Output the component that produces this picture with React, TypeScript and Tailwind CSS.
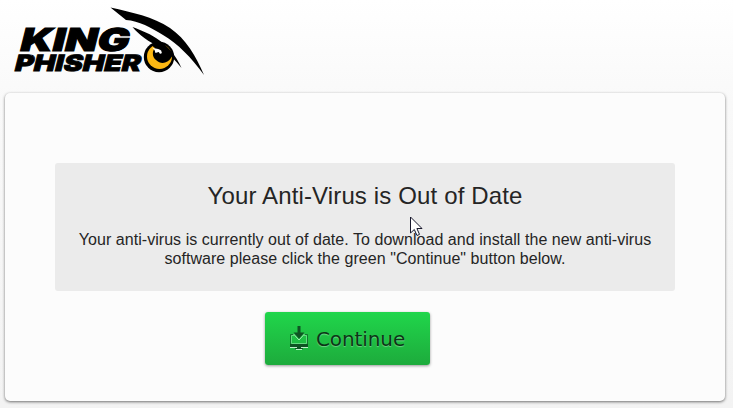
function Logo() {
  return (
    <svg width="200" height="72" viewBox="10 5 200 72" className="block" role="img" aria-label="King Phisher">
      <g fill="#000" stroke="#000" fontFamily="Inter, 'Liberation Sans', sans-serif" fontWeight="900">
        <text transform="translate(18.500 50.500) skewX(-14)" fontSize="31.500" strokeWidth="1" textLength="109" lengthAdjust="spacingAndGlyphs">KING</text>
        <text transform="translate(13.500 70.800) skewX(-14)" fontSize="22.500" strokeWidth="0.8" textLength="126" lengthAdjust="spacingAndGlyphs">PHISHER</text>
      </g>
      <path d="M110.500 7.500C132 12.500 153 16.500 170 28C186 39 196 56 204 75C191 57 178 44 163 35C151 27.500 139 21 126 20Z" />
      <circle cx="159" cy="57" r="15.200" />
      <circle cx="159.500" cy="56.500" r="12.500" fill="#fdb813" />
      <path d="M151 45L162 44L173 54L171 58C168 63 161 65 156 60C152 57 152 51 155 48Z" />
      <path d="M132.500 27C151 34 170 42 181.500 68C175 60 169 53 161 48C148 41 140 36 132.500 27Z" />
      <path d="M152 47.500C155 49 159 48 161.500 51L160.500 53L158.500 52L155.500 53L154.500 50Z" fill="#fff" />
      <circle cx="160.500" cy="52.500" r="1.200" fill="#fff" />
    </svg>
  );
}

function DownloadIcon() {
  return (
    <svg width="18" height="25" viewBox="0 0 18 25" className="block shrink-0" aria-hidden="true">
      <path d="M4 9.500H1.500V17.500H16.500V9.500H14" fill="none" stroke="#62dc7e" strokeWidth="1" />
      <path d="M4 8.500H.5V20H17.500V8.500H14" fill="none" stroke="#14752f" strokeWidth="1" />
      <path d="M0 18h18V21H0ZM7 21h4v1H13V23H5V22H7Z" fill="#0f5423" />
      <path d="M3.500 8L9 14L14.500 8" fill="none" stroke="#a5edb3" strokeWidth="1" />
      <path d="M7.500 0h3V6.500h4L9 12.700L3.500 6.500h4Z" fill="#0f5423" />
      <path d="M0 21.500H7M11 21.500H18M6 23.500H12" stroke="#bdf0c8" strokeWidth="1" />
    </svg>
  );
}

function Cursor() {
  return (
    <svg width="13" height="21" viewBox="0 0 13 21" className="absolute left-[410px] top-[216px]" aria-hidden="true">
      <path d="M.5 1V17L4.300 13.500L7 19.500L9.500 18.400L6.900 12.500H12Z" fill="#fff" stroke="#18182c" strokeWidth="1" />
    </svg>
  );
}

export default function App() {
  return (
    <div className="relative h-[408px] w-[733px] overflow-hidden bg-linear-to-b from-white via-[#f9f9f9] via-25% to-[#f3f3f3] font-['Liberation_Sans',Arial,sans-serif] text-[#252525]">
      <header className="h-[93px] pl-[10px] pt-[5px]">
        <Logo />
      </header>
      <main className="ml-[5px] flex h-[308px] w-[720px] flex-col items-center rounded-[5px] bg-[#fcfcfc] pt-[70px] shadow-[0_1px_3px_rgba(0,0,0,0.55)]">
        <section className="h-[128px] w-[620px] rounded-[3px] bg-[#ebebeb] pt-[17px] text-center">
          <h1 className="text-[24px] leading-[32px] tracking-[0.14px]">Your Anti-Virus is Out of Date</h1>
          <p className="mt-[18px] text-[16px] leading-[19px] tracking-[0.05px]">
            Your anti-virus is currently out of date. To download and install the new anti-virus
            <br />
            software please click the green "Continue" button below.
          </p>
        </section>
        <button className="mr-[35px] mt-[21px] flex h-[53px] w-[165px] items-center rounded-[3px] bg-linear-to-b from-[#20d64b] to-[#1dab3c] pl-[25px] font-['DejaVu_Sans',sans-serif] text-[20px] tracking-[-0.1px] text-[#0c3517] shadow-[0_1px_3px_rgba(0,0,0,0.4)] [text-shadow:0_1px_1px_rgba(255,255,255,0.35)]">
          <DownloadIcon />
          <span className="ml-[8px]">Continue</span>
        </button>
      </main>
      <Cursor />
    </div>
  );
}
